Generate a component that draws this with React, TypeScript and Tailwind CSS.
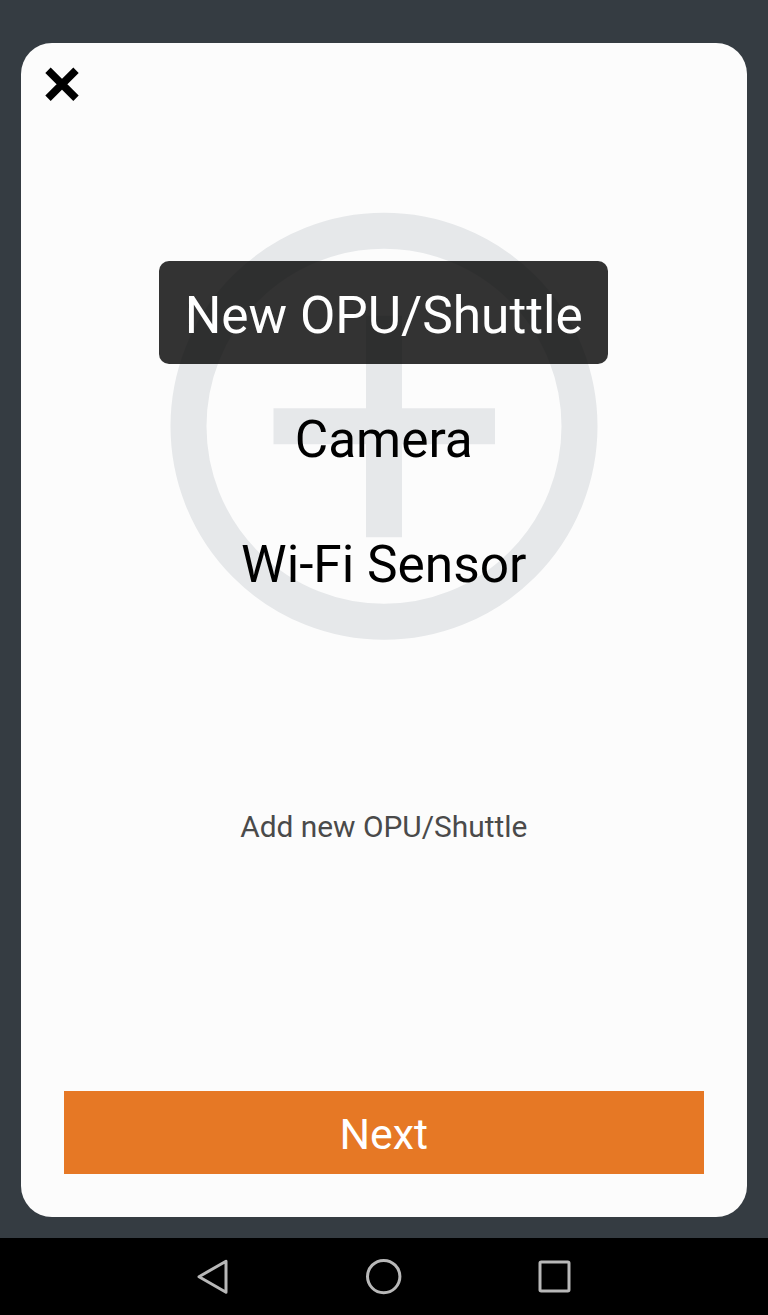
import { useState } from "react";

const DEVICE_TYPES = [
  { name: "New OPU/Shuttle", hint: "Add new OPU/Shuttle" },
  { name: "Camera", hint: "Add new Camera" },
  { name: "Wi-Fi Sensor", hint: "Add new Wi-Fi Sensor" },
];

export default function App() {
  const [selected, setSelected] = useState(0);

  return (
    <div className="flex h-[1315px] w-[768px] flex-col bg-[#353c42] font-['Roboto',sans-serif]">
      <main className="mt-[42.5px] mr-[21.5px] ml-[21px] flex h-[1174.5px] flex-col rounded-[31px] bg-[#fcfcfc] px-[42.5px] pb-[43px]">
        <button aria-label="Close" className="mt-6 -ml-[19px] h-[35px] w-[35px]">
          <svg viewBox="0 0 35 35" className="h-full w-full" fill="none">
            <path d="M3 3.2 31 31.2M31 3.2 3 31.2" stroke="#000" strokeWidth="7.6" />
          </svg>
        </button>

        {/* Device picker */}
        <section className="relative mt-[110px] flex h-[429px] flex-col items-center pt-[49.5px]">
          <PlusCircle />
          <div className="relative flex flex-col items-center gap-[21.5px]">
            {DEVICE_TYPES.map((device, i) => (
              <button
                key={device.name}
                onClick={() => setSelected(i)}
                className={`h-[103px] rounded-[10px] px-[25.5px] pt-[6px] text-[51.4px] leading-none whitespace-nowrap ${
                  i === selected ? "bg-black/80 text-white" : "text-black"
                }`}
              >
                {device.name}
              </button>
            ))}
          </div>
        </section>

        <p className="mt-[166px] text-center text-[29.87px] leading-[40px] text-[#4a4a4a]">
          {DEVICE_TYPES[selected].hint}
        </p>

        <button className="mt-auto h-[83px] bg-[#e67825] pt-1 text-[42.9px] leading-none text-white">
          Next
        </button>
      </main>

      <NavBar />
    </div>
  );
}

function PlusCircle() {
  return (
    <svg
      viewBox="0 0 428 428"
      className="absolute top-0 left-1/2 h-[428px] w-[428px] -translate-x-1/2"
      fill="none"
      stroke="#e6e8ea"
      strokeWidth="36"
    >
      <circle cx="214" cy="214.3" r="195.5" />
      <path d="M103.5 214.3h221.5M214 103.8v221.5" />
    </svg>
  );
}

function NavBar() {
  return (
    <nav className="mt-auto flex h-[77px] items-center justify-center gap-[130.7px] bg-black">
      <svg viewBox="0 0 40 40" className="h-10 w-10" fill="none" stroke="#b8b8b8" strokeWidth="3" strokeLinejoin="round">
        <path d="M33 4.2v31L6 19.7Z" />
      </svg>
      <svg viewBox="0 0 40 40" className="h-10 w-10" fill="none" stroke="#b8b8b8" strokeWidth="3">
        <circle cx="19.7" cy="19.6" r="16.2" />
      </svg>
      <svg viewBox="0 0 40 40" className="h-10 w-10" fill="none" stroke="#b8b8b8" strokeWidth="3">
        <rect x="5" y="5" width="29" height="29" rx="1.2" />
      </svg>
    </nav>
  );
}
